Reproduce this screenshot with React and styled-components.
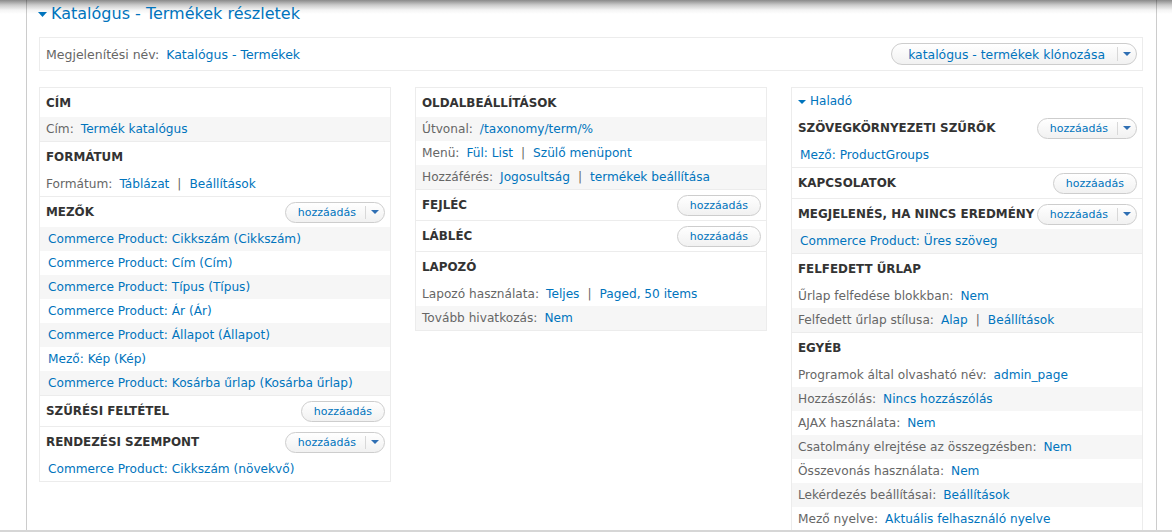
import React from 'react'
import styled, { createGlobalStyle } from 'styled-components'

const GlobalStyle = createGlobalStyle`
  html, body {
    margin: 0;
    padding: 0;
    background: #fff;
  }
  body {
    font-family: "DejaVu Sans", Verdana, sans-serif;
    font-size: 12px;
    color: #333;
  }
`

const Arrow = ({ w = 7, h = 4, color = '#0074bd' }) => (
  <svg width={w} height={h} viewBox={`0 0 ${w} ${h}`}>
    <polygon points={`0,0 ${w},0 ${w / 2},${h}`} fill={color} />
  </svg>
)

function Button({ label, split, big }) {
  return (
    <Pill $big={big}>
      <PillLabel $split={split} $big={big}>{label}</PillLabel>
      {split && (
        <PillArrow>
          <Arrow w={8} h={4} color="#2f6fb3" />
        </PillArrow>
      )}
    </Pill>
  )
}

function Value({ label, links }) {
  return (
    <>
      {label && <Label>{label}</Label>}
      {links.map((l, i) => (
        <React.Fragment key={i}>
          {i > 0 && <Pipe>|</Pipe>}
          <Link>{l}</Link>
        </React.Fragment>
      ))}
    </>
  )
}

function Section({ title, button, rows = [] }) {
  return (
    <SectionWrap>
      <SectionHead>
        <span>{title}</span>
        {button && <Button label="hozzáadás" split={button === 'split'} />}
      </SectionHead>
      {rows.map((r, i) => (
        <Row key={i} $shade={r.shade} $indent={!r.label}>
          <Value label={r.label} links={r.links} />
        </Row>
      ))}
    </SectionWrap>
  )
}

const fields = [
  'Commerce Product: Cikkszám (Cikkszám)',
  'Commerce Product: Cím (Cím)',
  'Commerce Product: Típus (Típus)',
  'Commerce Product: Ár (Ár)',
  'Commerce Product: Állapot (Állapot)',
  'Mező: Kép (Kép)',
  'Commerce Product: Kosárba űrlap (Kosárba űrlap)',
]

const column1 = [
  { title: 'Cím', rows: [{ label: 'Cím:', links: ['Termék katalógus'], shade: true }] },
  { title: 'Formátum', rows: [{ label: 'Formátum:', links: ['Táblázat', 'Beállítások'] }] },
  { title: 'Mezők', button: 'split', rows: fields.map((f, i) => ({ links: [f], shade: i % 2 === 0 })) },
  { title: 'Szűrési feltétel', button: 'single' },
  { title: 'Rendezési szempont', button: 'split', rows: [{ links: ['Commerce Product: Cikkszám (növekvő)'] }] },
]

const column2 = [
  {
    title: 'Oldalbeállítások',
    rows: [
      { label: 'Útvonal:', links: ['/taxonomy/term/%'], shade: true },
      { label: 'Menü:', links: ['Fül: List', 'Szülő menüpont'] },
      { label: 'Hozzáférés:', links: ['Jogosultság', 'termékek beállítása'], shade: true },
    ],
  },
  { title: 'Fejléc', button: 'single' },
  { title: 'Lábléc', button: 'single' },
  {
    title: 'Lapozó',
    rows: [
      { label: 'Lapozó használata:', links: ['Teljes', 'Paged, 50 items'] },
      { label: 'Tovább hivatkozás:', links: ['Nem'], shade: true },
    ],
  },
]

const column3 = [
  { title: 'Szövegkörnyezeti szűrők', button: 'split', rows: [{ links: ['Mező: ProductGroups'] }] },
  { title: 'Kapcsolatok', button: 'single' },
  { title: 'Megjelenés, ha nincs eredmény', button: 'split', rows: [{ links: ['Commerce Product: Üres szöveg'], shade: true }] },
  {
    title: 'Felfedett űrlap',
    rows: [
      { label: 'Űrlap felfedése blokkban:', links: ['Nem'] },
      { label: 'Felfedett űrlap stílusa:', links: ['Alap', 'Beállítások'], shade: true },
    ],
  },
  {
    title: 'Egyéb',
    rows: [
      { label: 'Programok által olvasható név:', links: ['admin_page'] },
      { label: 'Hozzászólás:', links: ['Nincs hozzászólás'], shade: true },
      { label: 'AJAX használata:', links: ['Nem'] },
      { label: 'Csatolmány elrejtése az összegzésben:', links: ['Nem'], shade: true },
      { label: 'Összevonás használata:', links: ['Nem'] },
      { label: 'Lekérdezés beállításai:', links: ['Beállítások'], shade: true },
      { label: 'Mező nyelve:', links: ['Aktuális felhasználó nyelve'] },
    ],
  },
]

export default function App() {
  return (
    <Frame>
      <GlobalStyle />
      <Page>
        <Title>
          <Arrow w={9} h={5} />
          <span>Katalógus - Termékek részletek</span>
        </Title>
        <DisplayBar>
          <div>
            <Value label="Megjelenítési név:" links={['Katalógus - Termékek']} />
          </div>
          <Button label="katalógus - termékek klónozása" split big />
        </DisplayBar>
        <Columns>
          <Box>
            {column1.map((s) => <Section key={s.title} {...s} />)}
          </Box>
          <Box>
            {column2.map((s) => <Section key={s.title} {...s} />)}
          </Box>
          <Box>
            <Legend>
              <Arrow w={8} h={4} />
              <span>Haladó</span>
            </Legend>
            {column3.map((s) => <Section key={s.title} {...s} />)}
          </Box>
        </Columns>
      </Page>
    </Frame>
  )
}

const Frame = styled.div`
  height: 530px;
  overflow: hidden;
  border-bottom: 2px solid #d6d6d6;
  background: linear-gradient(to bottom, #8a8a8a 0px, #cbcbcb 5px, #f4f4f4 10px, #fff 14px);
`

const Page = styled.div`
  margin-left: 26px;
  width: 1104px;
  height: 100%;
  border-left: 1px solid rgba(0, 0, 0, 0.2);
  border-right: 1px solid rgba(0, 0, 0, 0.2);
  padding: 4px 13px 0 12px;
`

const Title = styled.h2`
  display: flex;
  align-items: center;
  gap: 4px;
  margin: 0 0 13px -1px;
  font-size: 16px;
  font-weight: normal;
  line-height: 20px;
  color: #0074bd;
`

const DisplayBar = styled.div`
  display: flex;
  align-items: center;
  justify-content: space-between;
  height: 34px;
  box-sizing: border-box;
  border: 1px solid #ececec;
  padding: 0 5px 0 6px;
  background: #fff;
  font-size: 12.5px;
  white-space: nowrap;
`

const Pill = styled.span`
  display: inline-flex;
  align-items: stretch;
  height: ${(p) => (p.$big ? '22px' : '21px')};
  box-sizing: border-box;
  border: 1px solid #cdcdcd;
  border-radius: 11px;
  background: linear-gradient(to bottom, #ffffff, #f1f1f1);
  color: #0074bd;
  font-size: ${(p) => (p.$big ? '12.4px' : '11px')};
  font-weight: normal;
  text-transform: none;
  white-space: nowrap;
  cursor: pointer;
`

const PillLabel = styled.span`
  display: flex;
  align-items: center;
  padding-left: ${(p) => (p.$big ? '16px' : '12px')};
  padding-right: ${(p) => (p.$split ? (p.$big ? '12px' : '9px') : '12px')};
`

const PillArrow = styled.span`
  display: flex;
  align-items: center;
  justify-content: center;
  width: 18px;
  margin: 3px 0;
  border-left: 1px solid #d8d8d8;
`

const Columns = styled.div`
  display: grid;
  grid-template-columns: repeat(3, 352px);
  gap: 24px;
  margin-top: 16px;
  align-items: start;
`

const Box = styled.div`
  border: 1px solid #ececec;
  background: #fff;
`

const Legend = styled.div`
  display: flex;
  align-items: center;
  gap: 4px;
  height: 25px;
  padding: 0 6px;
  color: #0074bd;
  font-size: 12px;
  svg {
    margin-top: 3px;
  }
`

const SectionHead = styled.div`
  display: flex;
  align-items: center;
  justify-content: space-between;
  height: 30px;
  padding: 0 5px 0 6px;
  font-size: 11.9px;
  font-weight: bold;
  text-transform: uppercase;
  color: #333;
  white-space: nowrap;
`

const SectionWrap = styled.div`
  & + & {
    border-top: 1px solid #ececec;
  }
  &:first-child ${SectionHead} {
    height: 29px;
  }
`

const Row = styled.div`
  display: flex;
  align-items: center;
  height: 24px;
  padding-left: ${(p) => (p.$indent ? '8px' : '6px')};
  background: ${(p) => (p.$shade ? '#f6f6f6' : 'transparent')};
  color: #666;
  font-size: 12.15px;
  white-space: nowrap;
`

const Label = styled.span`
  color: #666;
  margin-right: 7px;
`

const Link = styled.a`
  color: #0074bd;
  text-decoration: none;
  cursor: pointer;
`

const Pipe = styled.span`
  color: #666;
  margin: 0 8px;
`
